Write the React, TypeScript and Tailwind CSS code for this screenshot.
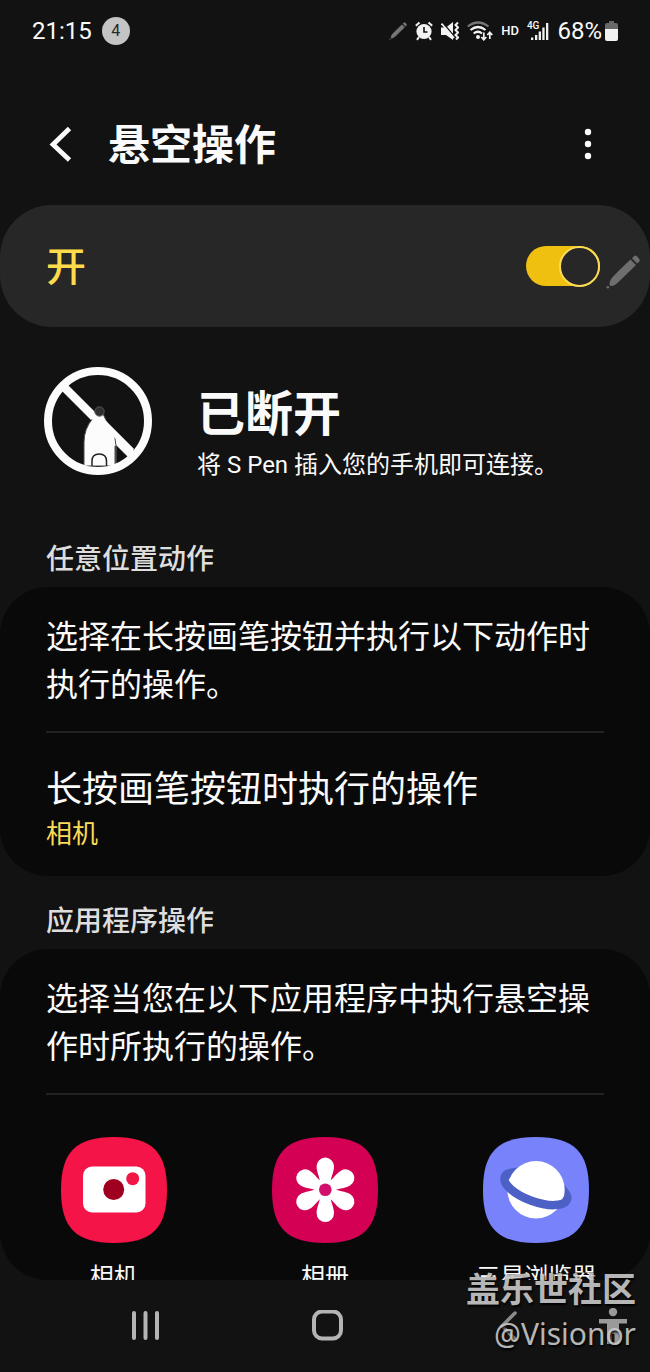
import { useState } from "react";
import type { ReactNode } from "react";

export default function App() {
  return (
    <div
      lang="zh-CN"
      className="relative flex h-screen flex-col overflow-hidden bg-[#121212] font-[Roboto,'Noto_Sans_CJK_SC',sans-serif] text-[#fafafa]"
    >
      <StatusBar />
      <Header />
      <main className="min-h-0 flex-1 overflow-y-auto rounded-b-[48px] [scrollbar-width:none]">
        <MasterSwitch />
        <PenStatus />
        <SectionTitle>任意位置动作</SectionTitle>
        <Card>
          <CardIntro>选择在长按画笔按钮并执行以下动作时执行的操作。</CardIntro>
          <button className="block w-full px-[46px] pt-[33px] pb-[22px] text-left">
            <span className="block text-[36px] leading-[48px]">
              长按画笔按钮时执行的操作
            </span>
            <span className="block text-[26px] leading-10 text-[#fbdb58]">
              相机
            </span>
          </button>
        </Card>
        <SectionTitle>应用程序操作</SectionTitle>
        <Card>
          <CardIntro>选择当您在以下应用程序中执行悬空操作时所执行的操作。</CardIntro>
          <div className="grid grid-cols-3 px-2 pt-[42px] pb-12">
            <AppItem label="相机" icon={<CameraIcon />} />
            <AppItem label="相册" icon={<GalleryIcon />} />
            <AppItem label="三星浏览器" icon={<BrowserIcon />} />
          </div>
        </Card>
      </main>
      <NavBar />
      <Watermark />
    </div>
  );
}

const StatusBar = () => (
  <div className="flex h-[62px] shrink-0 items-center justify-between px-8 text-2xl">
    <div className="flex items-center gap-[10px]">
      <span>21:15</span>
      <span className="flex size-7 items-center justify-center rounded-full bg-[#c4c4c4] text-base text-[#2a2a2a]">
        4
      </span>
    </div>
    <div className="flex items-center gap-2">
      <PenIcon className="size-[18px] text-[#757575]" />
      <AlarmIcon />
      <MuteIcon />
      <WifiIcon />
      <span className="text-[13px] font-medium">HD</span>
      <SignalIcon />
      <div className="flex items-center gap-[3px]">
        <span>68%</span>
        <svg className="h-5 w-[13px]" viewBox="0 0 13 20">
          <path d="M4 0h5v2h2q2 0 2 2v5H0V4q0-2 2-2h2z" fill="#686868" />
          <path d="M0 8h13v10q0 2-2 2H2q-2 0-2-2z" fill="#f2f2f2" />
        </svg>
      </div>
    </div>
  </div>
);

const Header = () => (
  <header className="flex h-[143px] shrink-0 items-center justify-between px-[46px] pt-5">
    <div className="flex items-center gap-[30px]">
      <button aria-label="返回" className="flex h-12 w-8 items-center">
        <svg className="h-9 w-7" viewBox="0 0 28 36" fill="none">
          <path d="M23.500 2.500 7 18.500 23.500 34" stroke="#fafafa" strokeWidth="4.800" />
        </svg>
      </button>
      <h1 className="pt-1 text-[42px] leading-[56px] font-bold">悬空操作</h1>
    </div>
    <button aria-label="更多选项" className="flex h-12 w-8 items-center justify-center">
      <svg className="h-8 w-2 shrink-0" viewBox="0 0 8 32" fill="#fafafa">
        <circle cx="4" cy="4" r="3.200" />
        <circle cx="4" cy="16" r="3.200" />
        <circle cx="4" cy="28" r="3.200" />
      </svg>
    </button>
  </header>
);

const MasterSwitch = () => {
  const [enabled, setEnabled] = useState(true);

  return (
    <div className="relative rounded-[52px] bg-[#272727]">
      <label className="flex h-[122px] items-center justify-between pr-[50px] pl-[46px]">
        <span className="pt-1 text-[40px] leading-[56px] font-medium text-[#fddb4a]">
          开
        </span>
        <input
          type="checkbox"
          role="switch"
          checked={enabled}
          onChange={(e) => setEnabled(e.target.checked)}
          className="flex h-10 w-[74px] appearance-none items-center rounded-full bg-[#5a5a5a] before:block before:size-[41px] before:shrink-0 before:rounded-full before:border-2 before:border-[#8a8a8a] before:bg-[#272727] before:content-[''] checked:justify-end checked:bg-[#efc010] checked:before:border-[#fadc55]"
        />
      </label>
      <PenIcon className="absolute top-[50px] right-[10px] size-[34px] text-[#6e6e6e]" />
    </div>
  );
};

const PenStatus = () => (
  <section className="flex items-start gap-[45px] px-11 pt-10">
    <svg className="size-[108px] shrink-0" viewBox="0 0 108 108">
      <path d="M20 20 88 88" stroke="#fcfcfc" strokeWidth="8.500" />
      <path
        d="M40 99V75Q40 62 49 51L53 47H59Q63 56 67 61 72 69 72 79V99Z"
        fill="#fcfcfc"
        stroke="#4a4a4a"
        strokeWidth="1"
      />
      <path d="M24 24 54 54M60 56 88 84" stroke="#fcfcfc" strokeWidth="6" />
      <path d="M71.500 79V99" stroke="#4a4a4a" strokeWidth="2" />
      <circle cx="55.500" cy="44.500" r="4.700" fill="#303030" stroke="#555" />
      <path
        d="M48 99V94Q48 87 55.200 87T62.500 94V99"
        fill="none"
        stroke="#222"
        strokeWidth="1.500"
      />
      <circle cx="54" cy="54" r="50" fill="none" stroke="#fcfcfc" strokeWidth="8" />
    </svg>
    <div className="pt-[18px]">
      <h2 className="text-[48px] leading-[60px] font-bold">已断开</h2>
      <p className="text-2xl leading-10">将 S Pen 插入您的手机即可连接。</p>
    </div>
  </section>
);

const SectionTitle = ({ children }: { children: ReactNode }) => (
  <h3 className="px-[46px] pt-[26px] pb-[7px] text-[28px] leading-10 font-medium text-[#dedede] first-of-type:pt-[55px]">
    {children}
  </h3>
);

const Card = ({ children }: { children: ReactNode }) => (
  <section className="overflow-hidden rounded-[48px] bg-[#090909]">
    {children}
  </section>
);

const CardIntro = ({ children }: { children: ReactNode }) => (
  <p className="mx-[46px] border-b-2 border-[#222] pt-[26px] pb-[22px] text-[32px] leading-[48px]">
    {children}
  </p>
);

const AppItem = ({ label, icon }: { label: string; icon: ReactNode }) => (
  <button className="flex flex-col items-center gap-4">
    <svg className="size-[106px]" viewBox="0 0 106 106">
      {icon}
    </svg>
    <span className="text-2xl leading-9 whitespace-nowrap">{label}</span>
  </button>
);

const SQUIRCLE =
  "M0 53C0 15 15 0 53 0S106 15 106 53 91 106 53 106 0 91 0 53Z";

const CameraIcon = () => (
  <>
    <path d={SQUIRCLE} fill="#f41447" />
    <rect x="22" y="29.500" width="62.500" height="46" rx="9" fill="#fff" />
    <circle cx="52.700" cy="52.500" r="10.500" fill="#a00020" />
    <circle cx="71.700" cy="41.700" r="6.500" fill="#ee1746" />
  </>
);

const GalleryIcon = () => (
  <>
    <path d={SQUIRCLE} fill="#d40054" />
    <g transform="translate(53.300 52.800)" fill="#fff">
      {[0, 60, 120, 180, 240, 300].map((angle) => (
        <path
          key={angle}
          d="M-5.300 -8C-6 -14 -8.700 -17.500 -8.700 -23.500A8.700 8.700 0 0 1 8.700 -23.500C8.700 -17.500 6 -14 5.300 -8Z"
          transform={`rotate(${angle})`}
        />
      ))}
      <circle r="10" />
      <circle r="6.300" fill="#d0106a" />
    </g>
  </>
);

const BrowserIcon = () => (
  <>
    <path d={SQUIRCLE} fill="#7782fb" />
    <g transform="translate(52.800 51.500) rotate(20)" fill="none" stroke="#4d60c6" strokeWidth="8.500">
      <path d="M-33 0A33 13 0 0 1 33 0" />
    </g>
    <circle cx="53" cy="52.800" r="28.700" fill="#fff" />
    <g transform="translate(52.800 51.500) rotate(20)" fill="none" stroke="#4d60c6" strokeWidth="8.500">
      <path d="M-31 -5Q-33 -2.500 -33 0A33 13 0 0 0 33 0Q33 -2.500 31 -4" />
    </g>
  </>
);

const PenIcon = ({ className }: { className: string }) => (
  <svg className={className} viewBox="0 0 34 34" fill="currentColor">
    <path d="M24.500 4.500 30 10 13 26.500Q8 31.500 4.500 31 2 29 5.500 23.500 7.500 20.500 24.500 4.500Z" />
    <path d="M26 3.200 28 1.200Q29.500 -.2 31.500 1.800L33 3.800Q34.500 5.500 32.700 7.200L31 8.500Z" />
    <circle cx="1.800" cy="32.300" r="1.300" />
  </svg>
);

const AlarmIcon = () => (
  <svg className="h-5 w-[18px]" viewBox="0 0 18 20" fill="none" stroke="#f2f2f2">
    <circle cx="9" cy="10.500" r="7.600" fill="#f2f2f2" stroke="none" />
    <path d="M.8 4.800 4.500 1.500M17.200 4.800 13.500 1.500M4 16 2 18.800M14 16 16 18.800" strokeWidth="2" />
    <path d="M9 6V11H12.500" stroke="#121212" strokeWidth="1.600" />
  </svg>
);

const MuteIcon = () => (
  <svg className="h-5 w-[18px]" viewBox="0 0 18 20" fill="none">
    <path d="M0 6.500H5L12 1V19L5 14H0Z" fill="#f2f2f2" />
    <path d="M1.500 1.500 13 15" stroke="#121212" strokeWidth="1.500" />
    <path d="M.5 2.500 13 17" stroke="#f2f2f2" strokeWidth="1.800" />
    <path
      d="M17 1.500 14.500 4 17 6.500 14.500 9 17 11.500 14.500 14 17 16.500 15 18.500"
      stroke="#f2f2f2"
      strokeWidth="2"
    />
  </svg>
);

const WifiIcon = () => (
  <svg className="h-5 w-[26px]" viewBox="0 0 26 20" fill="none" strokeWidth="2.200">
    <path d="M.8 5.500Q11 -2.500 21.500 5.500" stroke="#777" />
    <path d="M3.500 9Q11 3 18.500 9M6.700 12.500Q11 9 15 12.500" stroke="#f2f2f2" />
    <circle cx="11" cy="16" r="2" fill="#f2f2f2" />
    <path d="M16.800 11.500V18.500M14.300 16 16.800 18.800 19.300 16M22.800 18V11.500M20.300 14 22.800 11.200 25.300 14" stroke="#f2f2f2" strokeWidth="1.700" />
  </svg>
);

const SignalIcon = () => (
  <div className="flex items-end">
    <span className="-mr-2 self-start text-[10px] leading-[10px] font-medium">4G</span>
    <svg className="h-5 w-[18px]" viewBox="0 0 18 20" fill="#f2f2f2">
      <rect x="0" y="16.500" width="2.300" height="2.500" />
      <rect x="4" y="14" width="2.300" height="5" />
      <rect x="7.700" y="10.500" width="2.300" height="8.500" />
      <rect x="11.300" y="6.500" width="2.300" height="12.500" />
      <rect x="15" y="2" width="2.300" height="17" />
    </svg>
  </div>
);

const NavBar = () => (
  <nav className="flex h-[92px] shrink-0 items-center pr-[22px] pl-[55px] text-[#b4b4b4]">
    <button aria-label="最近任务" className="flex flex-1 justify-center">
      <svg className="size-[30px]" viewBox="0 0 30 30" fill="currentColor">
        <rect x="1" y="0" width="4" height="29" rx="2" />
        <rect x="12.500" y="0" width="4" height="29" rx="2" />
        <rect x="24" y="0" width="4" height="29" rx="2" />
      </svg>
    </button>
    <button aria-label="主屏幕" className="flex flex-1 justify-center">
      <svg className="size-8" viewBox="0 0 32 32" fill="none">
        <rect x="3" y="1.500" width="27" height="27" rx="8" stroke="currentColor" strokeWidth="4" />
      </svg>
    </button>
    <button aria-label="返回" className="flex flex-1 justify-center">
      <svg className="h-[30px] w-5" viewBox="0 0 20 30" fill="none">
        <path d="M17 2 4 15 17 28" stroke="#8c8c8c" strokeWidth="3.500" strokeLinecap="round" />
      </svg>
    </button>
    <button aria-label="无障碍">
      <svg className="h-9 w-[30px]" viewBox="0 0 30 36" fill="#9a9a9a">
        <circle cx="15" cy="4" r="4.200" />
        <path d="M1 11H29V15.500H21V36H16.500V26H13.500V36H9V15.500H1Z" />
      </svg>
    </button>
  </nav>
);

const Watermark = () => (
  <div className="pointer-events-none absolute right-[14px] bottom-4 text-right text-[#c8c8c8] opacity-90 [text-shadow:1px_2px_2px_#000]">
    <div className="text-[34px] leading-[44px] font-bold">盖乐世社区</div>
    <div className="font-['Noto_Sans',sans-serif] text-[30px] leading-[44px]">
      @Visionor
    </div>
  </div>
);
